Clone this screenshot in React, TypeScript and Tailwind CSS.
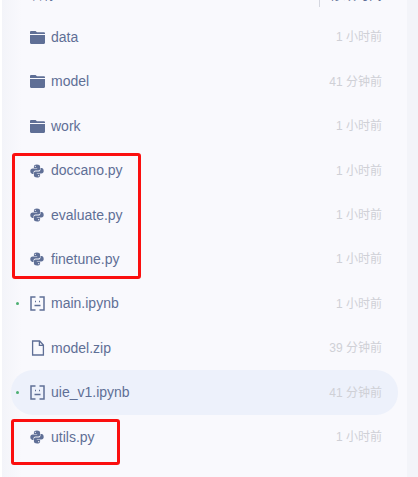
import React from 'react';

type FileKind = 'folder' | 'python' | 'notebook' | 'file';

interface FileRow {
    name: string;
    time: string;
    kind: FileKind;
    dot?: boolean;
    active?: boolean;
}

const files: FileRow[] = [
    { name: 'data', time: '1 小时前', kind: 'folder' },
    { name: 'model', time: '41 分钟前', kind: 'folder' },
    { name: 'work', time: '1 小时前', kind: 'folder' },
    { name: 'doccano.py', time: '1 小时前', kind: 'python' },
    { name: 'evaluate.py', time: '1 小时前', kind: 'python' },
    { name: 'finetune.py', time: '1 小时前', kind: 'python' },
    { name: 'main.ipynb', time: '1 小时前', kind: 'notebook', dot: true },
    { name: 'model.zip', time: '39 分钟前', kind: 'file' },
    { name: 'uie_v1.ipynb', time: '41 分钟前', kind: 'notebook', dot: true, active: true },
    { name: 'utils.py', time: '1 小时前', kind: 'python' },
];

const FileIcon = ({ kind }: { kind: FileKind }) => {
    if (kind === 'folder') {
        return (
            <svg width="15" height="15" viewBox="0 0 15 15" className="shrink-0">
                <path d="M0 2.200C0 1.500.5 1 1.200 1h3.900c.4 0 .7.100 1 .4L7 2.200h6.800c.7 0 1.200.5 1.200 1.200V4H0z" fill="#5f6f96" />
                <path d="M0 4.900h15v7.900c0 .7-.5 1.200-1.200 1.200H1.200C.5 14 0 13.500 0 12.800z" fill="#5f6f96" />
            </svg>
        );
    }
    if (kind === 'python') {
        return (
            <svg width="14" height="14" viewBox="0 0 14 14" className="shrink-0">
                <path d="M6.900.5C4.900.5 3.900 1.300 3.900 2.600v1.300h3.300v.7H2.600C1.200 4.600.3 5.600.3 7.100c0 1.700.9 2.800 2.100 2.800h1.100V8.500c0-1.200 1-2.100 2.100-2.100h2.800c.9 0 1.700-.7 1.700-1.600V2.500C10.100 1.300 8.800.5 6.900.5zM5.300 1.700a.65.65 0 1 1 0 1.300.65.65 0 0 1 0-1.300z" fill="#5f6f96" />
                <path d="M7.100 13.500c2 0 3-.8 3-2.100V10.100H6.800v-.7h4.600c1.400 0 2.300-1 2.300-2.500 0-1.700-.9-2.800-2.100-2.800h-1.100v1.400c0 1.200-1 2.100-2.100 2.100H5.600c-.9 0-1.700.7-1.700 1.600v2.300c0 1.200 1.300 2 3.200 2zM8.700 12.300a.65.65 0 1 1 0-1.300.65.65 0 0 1 0 1.300z" fill="#5f6f96" />
            </svg>
        );
    }
    if (kind === 'notebook') {
        return (
            <svg width="15" height="15" viewBox="0 0 15 15" fill="none" className="shrink-0">
                <path d="M5.500 1H1v13h4.500M9.500 1H14v13H9.500" stroke="#5f6f96" strokeWidth="1.500" />
                <path d="M5 5.500h1M9 5.500h1M4.500 9.500h6" stroke="#5f6f96" strokeWidth="1.300" />
            </svg>
        );
    }
    return (
        <svg width="16" height="16" viewBox="0 0 16 16" fill="none" className="shrink-0">
            <path d="M2.600 1h7l3.800 4v10H2.600zM9.400 1v4.300h4" stroke="#5f6f96" strokeWidth="1.300" />
        </svg>
    );
};

export default function App() {
    return (
        <div className="relative h-[477px] w-[418px] overflow-hidden bg-white font-['Liberation_Sans','Noto_Sans_CJK_SC',sans-serif]">
            <div className="ml-[2px] flex h-full w-[416px] bg-[#f3f4f9] pr-[11px]">
                <div className="h-full w-full bg-[linear-gradient(90deg,#f3f4f9,#f9f9fd_20px)] pl-[9px] pr-[9px]">
                    {/* Clipped table header */}
                    <div className="-mt-[12px] flex h-[19px] items-start justify-between pl-[19px] pr-[16px] text-[13px] leading-none text-[#5f6f96]">
                        <span>名称</span>
                        <div className="flex items-start">
                            <div className="mr-[10px] h-[19px] w-px bg-[#d5d7e0]" />
                            <span>修改时间</span>
                        </div>
                    </div>

                    {/* File rows */}
                    <div className="mt-[8.3px] flex flex-col">
                        {files.map(f => (
                            <div
                                key={f.name}
                                className={`flex h-[44.4px] items-center rounded-[22px] pr-[16px] ${f.active ? 'bg-[#edf1fb]' : ''}`}
                            >
                                <div className="w-[19px] pl-[5px]">
                                    {f.dot && <div className="h-[3px] w-[3px] rounded-full bg-[#4caf72]" />}
                                </div>
                                <div className="flex w-[21px] shrink-0 items-center">
                                    <FileIcon kind={f.kind} />
                                </div>
                                <span className="text-[14px] text-[#5f6f96]">{f.name}</span>
                                <span className="ml-auto text-[12px] text-[#cfd0d6]">{f.time}</span>
                            </div>
                        ))}
                    </div>
                </div>
            </div>

            {/* Annotation boxes drawn over the screenshot */}
            <div className="absolute left-[12px] top-[153px] h-[126px] w-[129px] rounded-[3px] border-[3px] border-[#fb0f0f]" />
            <div className="absolute left-[11px] top-[419px] h-[46px] w-[109px] rounded-[3px] border-[3px] border-[#fb0f0f]" />
        </div>
    );
}
